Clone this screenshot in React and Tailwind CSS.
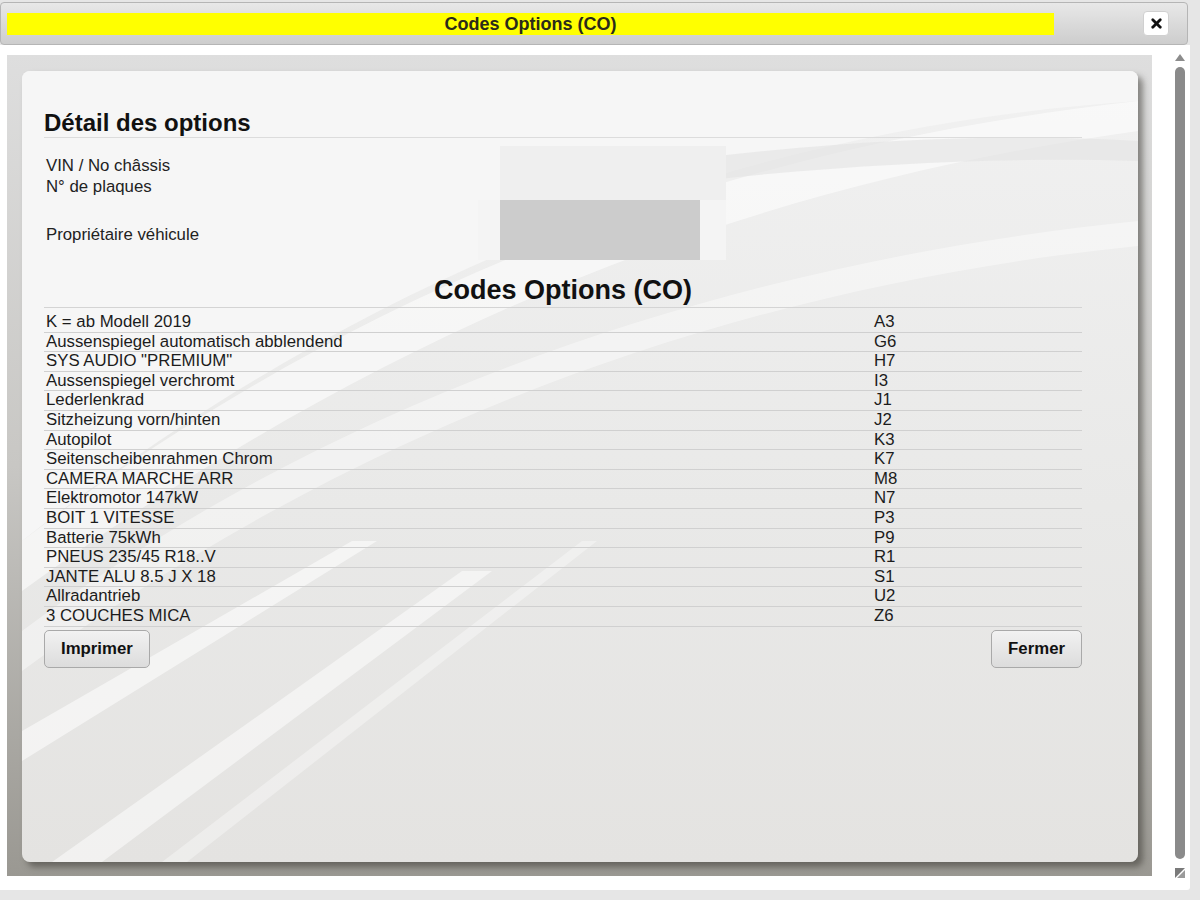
import { X } from 'lucide-react';

const options = [
    ['K = ab Modell 2019', 'A3'],
    ['Aussenspiegel automatisch abblendend', 'G6'],
    ['SYS AUDIO "PREMIUM"', 'H7'],
    ['Aussenspiegel verchromt', 'I3'],
    ['Lederlenkrad', 'J1'],
    ['Sitzheizung vorn/hinten', 'J2'],
    ['Autopilot', 'K3'],
    ['Seitenscheibenrahmen Chrom', 'K7'],
    ['CAMERA MARCHE ARR', 'M8'],
    ['Elektromotor 147kW', 'N7'],
    ['BOIT 1 VITESSE', 'P3'],
    ['Batterie 75kWh', 'P9'],
    ['PNEUS 235/45 R18..V', 'R1'],
    ['JANTE ALU 8.5 J X 18', 'S1'],
    ['Allradantrieb', 'U2'],
    ['3 COUCHES MICA', 'Z6'],
];

function Swooshes() {
    return (
        <svg className="absolute inset-0 w-full h-full" viewBox="0 0 1116 791" preserveAspectRatio="none">
            <defs>
                <linearGradient id="cardBg" x1="0" y1="0" x2="0" y2="1">
                    <stop offset="0" stopColor="#f1f1f1" />
                    <stop offset="0.55" stopColor="#e9e9e8" />
                    <stop offset="1" stopColor="#e4e3e1" />
                </linearGradient>
            </defs>
            <rect width="1116" height="791" fill="url(#cardBg)" />
            {/* light upper-left area */}
            <path d="M0 0 H1116 V30 C 820 50, 420 140, 0 470 Z" fill="#f6f6f6" />
            {/* sweeping arcs */}
            <path d="M0 470 C 380 180, 760 70, 1116 30 L1116 60 C 760 110, 400 230, 0 520 Z" fill="#ffffff" opacity="0.55" />
            <path d="M0 560 C 320 320, 720 190, 1116 150 L1116 175 C 720 215, 340 350, 0 600 Z" fill="#ffffff" opacity="0.4" />
            <path d="M520 110 C 760 70, 960 60, 1116 70 L1116 90 C 960 85, 760 95, 520 130 Z" fill="#e2e2e2" opacity="0.6" />
            {/* diagonal strokes lower left */}
            <path d="M0 660 L 330 470 L 355 470 L 0 690 Z" fill="#ffffff" opacity="0.55" />
            <path d="M30 791 L 440 500 L 470 500 L 80 791 Z" fill="#ffffff" opacity="0.5" />
            <path d="M140 791 L 560 470 L 575 470 L 165 791 Z" fill="#ffffff" opacity="0.35" />
        </svg>
    );
}

export default function App() {
    return (
        <div className="w-[1200px] h-[900px] bg-[#e6e6e6] overflow-hidden font-['Liberation_Sans',Arial,sans-serif] text-[#1c1c1c]">
            <div className="pt-[2px] w-[1190px]">
                {/* Title bar */}
                <div className="h-[43px] w-[1188px] rounded-[4px] border border-[#b5b5b5] bg-gradient-to-b from-[#e8e8e8] to-[#cdcdcd] flex items-center">
                    <div className="ml-[6px] w-[1047px] h-[22px] bg-[#ffff00] flex items-center justify-center text-[18px] leading-[22px] font-bold text-[#2a2a1a]">
                        Codes Options (CO)
                    </div>
                    <button className="ml-[89px] w-[26px] h-[25px] rounded-[4px] bg-white border border-[#d0d0d0] flex items-center justify-center">
                        <X size={15} strokeWidth={4.5} className="text-[#111]" />
                    </button>
                </div>

                {/* Dialog body */}
                <div className="h-[845px] w-[1190px] bg-white flex rounded-br-[3px]">
                    <div className="ml-[7px] mt-[10px] w-[1145px] h-[821px] bg-gradient-to-b from-[#dedede] via-[#c8c7c4] to-[#9a9892] pl-[15px] pt-[16px]">
                        {/* Card */}
                        <div className="relative w-[1116px] h-[791px] rounded-[8px] overflow-hidden shadow-[5px_5px_6px_rgba(60,58,52,0.55)]">
                            <Swooshes />
                            <div className="relative pl-[22px] pt-[38px] w-[1060px]">
                                <h2 className="text-[24px] leading-[28px] font-bold text-[#111] border-b border-[#dcdcdc]">
                                    Détail des options
                                </h2>

                                <div className="mt-[8px] text-[16.8px] leading-[21px] text-[#222]">
                                    <div className="flex h-[54px]">
                                        <div className="w-[456px] pl-[2px] pt-[9px]">
                                            <div>VIN / No châssis</div>
                                            <div>N° de plaques</div>
                                        </div>
                                        <div className="w-[226px] h-[54px] bg-[#efefef]" />
                                    </div>
                                    <div className="flex h-[60px]">
                                        <div className="w-[434px] pl-[2px] pt-[24px]">Propriétaire véhicule</div>
                                        <div className="w-[248px] h-[60px] bg-[#f4f4f4] pl-[22px]">
                                            <div className="w-[200px] h-[60px] bg-[#cccccc]" />
                                        </div>
                                    </div>
                                </div>

                                <h1 className="mt-[13px] text-[27px] leading-[34px] font-bold text-center text-[#111] border-b border-[#d4d4d4]">
                                    Codes Options (CO)
                                </h1>

                                <div className="mt-[5px] text-[16.8px] leading-[18.6px] text-[#1c1c1c]">
                                    {options.map(([label, code]) => (
                                        <div key={code} className="flex border-b border-[#d0d0d0]">
                                            <span className="w-[830px] pl-[2px]">{label}</span>
                                            <span>{code}</span>
                                        </div>
                                    ))}
                                </div>

                                <div className="mt-[3px] flex justify-between">
                                    <button className="h-[38px] px-[16px] rounded-[5px] border border-[#a9a9a9] bg-gradient-to-b from-[#f2f2f2] to-[#dcdcdc] text-[16.8px] font-bold text-[#111]">
                                        Imprimer
                                    </button>
                                    <button className="h-[38px] px-[16px] rounded-[5px] border border-[#a9a9a9] bg-gradient-to-b from-[#f2f2f2] to-[#dcdcdc] text-[16.8px] font-bold text-[#111]">
                                        Fermer
                                    </button>
                                </div>
                            </div>
                        </div>
                    </div>

                    {/* Scrollbar */}
                    <div className="ml-[20px] w-[16px] flex flex-col items-center pt-[9px]">
                        <svg width="10" height="7" viewBox="0 0 10 7">
                            <path d="M5 0 L10 7 H0 Z" fill="#8c8c8c" />
                        </svg>
                        <div className="mt-[6px] w-[10px] h-[792px] rounded-full bg-[#8a8a8a]" />
                        <svg className="mt-[8px]" width="12" height="12" viewBox="0 0 12 12">
                            <path d="M1 1 H11 L1 11 Z" fill="#7a7a7a" />
                            <path d="M11 3 V11 H3 Z" fill="#9a9a9a" />
                        </svg>
                    </div>
                </div>
            </div>
        </div>
    );
}
